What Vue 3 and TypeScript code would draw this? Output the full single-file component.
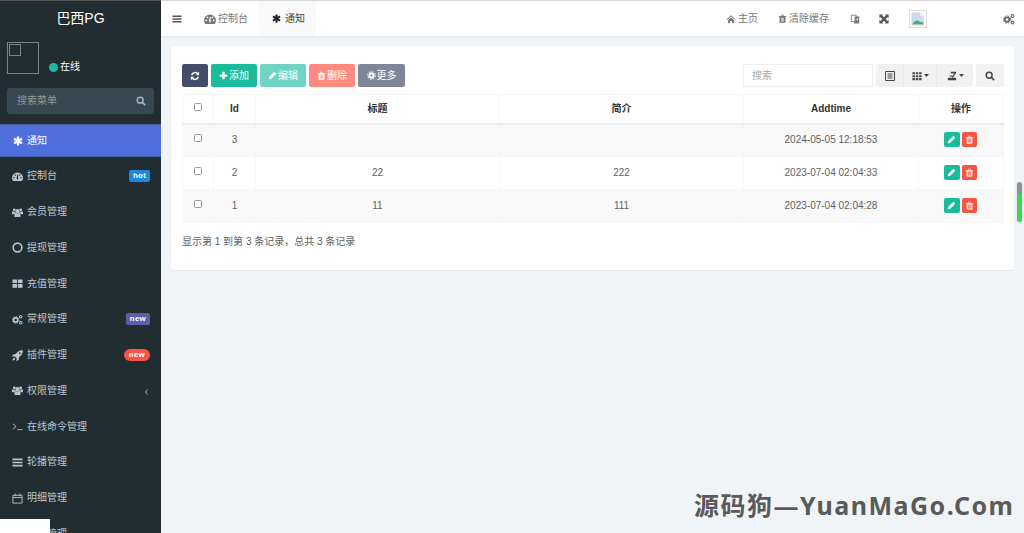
<script setup lang="ts">
interface MenuItem { label: string; icon: string; badge?: string; kind?: string; caret?: boolean; active?: boolean }
const menu: MenuItem[] = [
  { label: '通知', icon: 'asterisk', active: true },
  { label: '控制台', icon: 'dash', badge: 'hot', kind: 'hot' },
  { label: '会员管理', icon: 'users' },
  { label: '提现管理', icon: 'circle' },
  { label: '充值管理', icon: 'th' },
  { label: '常规管理', icon: 'cogs', badge: 'new', kind: 'purple' },
  { label: '插件管理', icon: 'rocket', badge: 'new', kind: 'red' },
  { label: '权限管理', icon: 'users', caret: true },
  { label: '在线命令管理', icon: 'term' },
  { label: '轮播管理', icon: 'bars' },
  { label: '明细管理', icon: 'cal' },
  { label: '记录管理', icon: 'bars' },
]
const rows = [
  { id: 3, title: '', intro: '', time: '2024-05-05 12:18:53' },
  { id: 2, title: '22', intro: '222', time: '2023-07-04 02:04:33' },
  { id: 1, title: '11', intro: '111', time: '2023-07-04 02:04:28' },
]
</script>

<template>
  <div class="page">
    <svg class="defs" aria-hidden="true">
      <symbol id="asterisk" viewBox="0 0 24 24"><path d="M12 1v22M2.500 6.500l19 11M21.500 6.500l-19 11" fill="none" stroke="currentColor" stroke-width="5.500"/></symbol>
      <symbol id="dash" viewBox="0 0 24 24"><path fill-rule="evenodd" d="M12 3a12 12 0 0 0-12 12c0 2.600.9 5 2.400 7h19.200a12 12 0 0 0 2.400-7A12 12 0 0 0 12 3Zm-7.500 13.500a1.700 1.700 0 1 1 0-3.400 1.700 1.700 0 0 1 0 3.400Zm2.500-6a1.700 1.700 0 1 1 0-3.400 1.700 1.700 0 0 1 0 3.400Zm6.500 8a2.500 2.500 0 0 1-3.500-2.500l1.500-8.500 2 .4-.2 8a2.500 2.500 0 0 1 .2 2.600ZM17 10.500a1.700 1.700 0 1 1 0-3.400 1.700 1.700 0 0 1 0 3.400Zm2.500 6a1.700 1.700 0 1 1 0-3.400 1.700 1.700 0 0 1 0 3.400Z"/></symbol>
      <symbol id="users" viewBox="0 0 24 24"><circle cx="12" cy="9" r="4.500"/><circle cx="5" cy="6.500" r="3"/><circle cx="19" cy="6.500" r="3"/><path d="M5.500 22v-5c0-3 2-4.500 3-4.500 1 1 2.200 1.500 3.500 1.500s2.500-.5 3.500-1.500c1 0 3 1.500 3 4.500v5ZM0 16v-4c0-1.500 1-2.500 2-2.500.8.700 1.800 1.200 3 1.200.5 0 1 0 1.500-.2.300 1 .8 1.500 1.300 2-2 1-3.300 2.500-3.400 3.500Zm24 0v-4c0-1.500-1-2.500-2-2.500-.8.700-1.800 1.200-3 1.200-.5 0-1 0-1.500-.2-.3 1-.8 1.500-1.300 2 2 1 3.300 2.500 3.400 3.500Z"/></symbol>
      <symbol id="circle" viewBox="0 0 24 24"><circle cx="12" cy="12" r="9.500" fill="none" stroke="currentColor" stroke-width="3.500"/></symbol>
      <symbol id="th" viewBox="0 0 24 24"><path d="M1 3h10v8H1Zm12 0h10v8H13ZM1 13h10v8H1Zm12 0h10v8H13Z"/></symbol>
      <symbol id="cogs" viewBox="0 0 24 24"><circle cx="8" cy="13" r="4.500" fill="none" stroke="currentColor" stroke-width="3.500"/><circle cx="8" cy="13" r="7.300" fill="none" stroke="currentColor" stroke-width="2" stroke-dasharray="3 2.700"/><circle cx="19" cy="6" r="2.800" fill="none" stroke="currentColor" stroke-width="2.200"/><circle cx="19" cy="19" r="2.800" fill="none" stroke="currentColor" stroke-width="2.200"/></symbol>
      <symbol id="rocket" viewBox="0 0 24 24"><path d="M23.500 .5c.5 6.500-2.500 11.500-8 15l-.5 5.500-5 3-.5-1 1-4.500-5-5-4.500 1-1-.5 3-5 5.500-.5C11.500 3 17 0 23.500 .5ZM17 5a2 2 0 1 0 0 4 2 2 0 0 0 0-4ZM4 17c1.500 0 3 1.500 3 3-1 1.500-4 2.500-6 3 .5-2 1.500-5 3-6Z"/></symbol>
      <symbol id="term" viewBox="0 0 24 24"><path d="m2 6 7 6-7 6M12 19h11" fill="none" stroke="currentColor" stroke-width="2"/></symbol>
      <symbol id="bars" viewBox="0 0 24 24"><path d="M1 3.500h22v3.500H1Zm0 6.750h22v3.500H1ZM1 17h22v3.500H1Z"/></symbol>
      <symbol id="cal" viewBox="0 0 24 24"><path d="M2 5h20v17H2Zm0 5h20M7 1v6M17 1v6" fill="none" stroke="currentColor" stroke-width="2"/></symbol>
      <symbol id="refresh" viewBox="0 0 24 24"><path d="M4 10a8.500 8.500 0 0 1 14.500-3.500M20 14A8.500 8.500 0 0 1 5.500 17.500" fill="none" stroke="currentColor" stroke-width="3.600"/><path d="M22 2v8h-8ZM2 22v-8h8Z"/></symbol>
      <symbol id="plus" viewBox="0 0 24 24"><path d="M9 2h6v7h7v6h-7v7H9v-7H2V9h7Z"/></symbol>
      <symbol id="pencil" viewBox="0 0 24 24"><path d="M17 2 22 7 8 21l-6 1 1-6Z"/></symbol>
      <symbol id="trash" viewBox="0 0 24 24"><path fill-rule="evenodd" d="M9 2h6l1.500 3H22v2.500h-2V21a2 2 0 0 1-2 2H6a2 2 0 0 1-2-2V7.500H2V5h5.500Zm.5 1.800L9 5h6l-.5-1.200ZM8 10v10h1.500V10Zm3.250 0v10h1.500V10ZM14.500 10v10H16V10Z"/></symbol>
      <symbol id="gear" viewBox="0 0 24 24"><circle cx="12" cy="12" r="5.500" fill="none" stroke="currentColor" stroke-width="5"/><circle cx="12" cy="12" r="10" fill="none" stroke="currentColor" stroke-width="3" stroke-dasharray="4 3.850"/></symbol>
      <symbol id="home" viewBox="0 0 24 24"><path d="M12 3 23 13l-1.500 1.500L12 6l-9.500 8.500L1 13Zm-7 11.500 7-6 7 6V22h-5v-5h-4v5H5Z"/></symbol>
      <symbol id="expand" viewBox="0 0 24 24"><path d="M1 1h9L7.500 3.500 12 8l4.500-4.500L14 1h9v9l-2.500-2.500L16 12l4.500 4.500L23 14v9h-9l2.500-2.500L12 16l-4.500 4.500L10 23H1v-9l2.500 2.500L8 12 3.500 7.500 1 10Z"/></symbol>
      <symbol id="lang" viewBox="0 0 24 24"><path d="M3 3h12v15H3Z" fill="none" stroke="currentColor" stroke-width="2"/><path d="M11 6h11v17H9l2-5Zm4 5v2h-2v2h6v-4Z"/></symbol>
      <symbol id="list" viewBox="0 0 10 10"><path d="M.5.500h9v9h-9Z" fill="none" stroke="currentColor" stroke-width="1"/><path d="M2.500 2.500h5v1h-5Zm0 2h5v1h-5Zm0 2h5v1h-5Z"/></symbol>
      <symbol id="cols" viewBox="0 0 24 24"><path d="M1 3h6v5H1Zm8 0h6v5H9Zm8 0h6v5h-6ZM1 10h6v5H1Zm8 0h6v5H9Zm8 0h6v5h-6ZM1 17h6v5H1Zm8 0h6v5H9Zm8 0h6v5h-6Z"/></symbol>
      <symbol id="export" viewBox="0 0 24 24"><path d="M9 2h13v3L14 16l-3-2 7-8H9ZM6 11h6v2H6ZM2 16h20v6H2Z"/></symbol>
      <symbol id="search" viewBox="0 0 24 24"><circle cx="10" cy="10" r="7" fill="none" stroke="currentColor" stroke-width="3.500"/><path d="m15 15 7 7" stroke="currentColor" stroke-width="4"/></symbol>
      <symbol id="caret" viewBox="0 0 10 6"><path d="M0 0h10L5 6Z"/></symbol>
      <symbol id="chev" viewBox="0 0 10 14"><path d="M7 2 3 7l4 5" fill="none" stroke="currentColor" stroke-width="1.600"/></symbol>
    </svg>

    <aside class="side">
      <div class="logo">巴西PG</div>
      <div class="user">
        <div class="avatar"><span class="avatar-in"></span></div>
        <div class="status"><span class="dot"></span>在线</div>
      </div>
      <div class="menu-search">
        <span>搜索菜单</span>
        <svg class="ic11"><use href="#search" /></svg>
      </div>
      <ul class="menu">
        <li v-for="m in menu" :key="m.label" :class="{ active: m.active }">
          <svg class="mi" :class="{ tight: m.icon === 'asterisk' }"><use :href="'#' + m.icon" /></svg>
          <span class="ml">{{ m.label }}</span>
          <span v-if="m.badge" class="badge" :class="m.kind">{{ m.badge }}</span>
          <svg v-if="m.caret" class="chev"><use href="#chev" /></svg>
        </li>
      </ul>
    </aside>

    <main class="main">
      <header class="top">
        <svg class="burger"><use href="#bars" /></svg>
        <div class="tab"><svg class="ic12"><use href="#dash" /></svg>控制台</div>
        <div class="tab current"><svg class="ic9"><use href="#asterisk" /></svg>通知</div>
        <div class="top-right">
          <span class="tr tr-home"><svg class="ic10"><use href="#home" /></svg>主页</span>
          <span class="tr tr-clear"><svg class="ic9"><use href="#trash" /></svg>清除缓存</span>
          <span class="tr tr-lang"><svg class="ic10"><use href="#lang" /></svg></span>
          <span class="tr tr-exp"><svg class="ic10"><use href="#expand" /></svg></span>
          <span class="broken">
            <svg viewBox="0 0 16 16" width="14" height="14"><path d="M1 1h9l4 4v10H1Z" fill="#c9dcf5" stroke="#c4c4c4" stroke-width=".6"/><path d="M2 14c2-5 6-5 8-3l4 1v2Z" fill="#4caf50"/><path d="M10 1v4h4" fill="#fff" stroke="#c4c4c4" stroke-width=".6"/></svg>
          </span>
          <svg class="ic12 tr-cogs"><use href="#cogs" /></svg>
        </div>
      </header>

      <section class="panel">
        <div class="toolbar">
          <button class="btn navy"><svg class="ic10"><use href="#refresh" /></svg></button>
          <button class="btn teal w46"><svg class="ic9"><use href="#plus" /></svg>添加</button>
          <button class="btn teal-l w46"><svg class="ic9"><use href="#pencil" /></svg>编辑</button>
          <button class="btn red-l w46"><svg class="ic9"><use href="#trash" /></svg>删除</button>
          <button class="btn grey w47"><svg class="ic9"><use href="#gear" /></svg>更多</button>
          <div class="search-box">搜索</div>
          <div class="group">
            <button class="gbtn g1"><svg class="ic10"><use href="#list" /></svg></button>
            <button class="gbtn g2"><svg class="ic10"><use href="#cols" /></svg><svg class="car"><use href="#caret" /></svg></button>
            <button class="gbtn g3"><svg class="ic10"><use href="#export" /></svg><svg class="car"><use href="#caret" /></svg></button>
          </div>
          <button class="gbtn solo"><svg class="ic10"><use href="#search" /></svg></button>
        </div>

        <table class="grid">
          <colgroup>
            <col style="width: 31px" /><col style="width: 42px" /><col style="width: 244px" /><col style="width: 244px" /><col style="width: 175px" /><col style="width: 85px" />
          </colgroup>
          <thead>
            <tr>
              <th><span class="check"></span></th>
              <th>Id</th><th>标题</th><th>简介</th><th>Addtime</th><th>操作</th>
            </tr>
          </thead>
          <tbody>
            <tr v-for="r in rows" :key="r.id">
              <td><span class="check"></span></td>
              <td>{{ r.id }}</td>
              <td>{{ r.title }}</td>
              <td>{{ r.intro }}</td>
              <td>{{ r.time }}</td>
              <td>
                <div class="ops">
                  <button class="op teal"><svg class="ic9"><use href="#pencil" /></svg></button>
                  <button class="op red"><svg class="ic9"><use href="#trash" /></svg></button>
                </div>
              </td>
            </tr>
          </tbody>
        </table>
        <p class="summary">显示第 1 到第 3 条记录，总共 3 条记录</p>
      </section>
    </main>

    <div class="blank"></div>
    <div class="scroll"></div>
    <div class="mark">源码狗—YuanMaGo.Com</div>
  </div>
</template>

<style>
html, body { margin: 0; overflow: hidden; }
</style>

<style scoped>
* { box-sizing: border-box; }
.defs { display: none; }
svg { fill: currentColor; flex: none; }
.page {
  position: relative;
  display: flex;
  width: 1024px;
  height: 533px;
  overflow: hidden;
  background: #f1f4f6;
  font: 10px/1.4 "Liberation Sans", "Noto Sans CJK SC", sans-serif;
  color: #5f5f5f;
}
.ic9 { width: 9px; height: 9px; }
.ic10 { width: 10px; height: 10px; }
.ic11 { width: 11px; height: 11px; }
.ic12 { width: 12px; height: 12px; }

.side { width: 161px; flex: none; background: #222d32; color: #b8c7ce; overflow: hidden; border-top: 1px solid #555; }
.logo { height: 34px; padding-top: 2px; display: flex; align-items: center; justify-content: center; color: #fff; font-size: 14px; }
.user { position: relative; height: 53px; padding: 7px 0 0 7px; display: flex; }
.avatar { width: 32px; height: 32px; border: 1px solid #7d8487; padding: 1px 0 0 1px; }
.avatar-in { display: block; width: 12px; height: 12px; border: 1px solid #7d8487; }
.status { display: flex; align-items: center; height: 12px; margin: 19px 0 0 10px; color: #fff; }
.dot { width: 9px; height: 9px; border-radius: 50%; background: #18bc9c; margin-right: 2px; }
.menu-search { margin: 0 7px; height: 26px; border-radius: 3px; background: #374850; color: #8b9a9f; display: flex; align-items: center; justify-content: space-between; padding: 0 8px 0 10px; }
.menu-search svg { color: #a9b4b8; width: 10px; height: 10px; }
.menu { list-style: none; margin: 10px 0 0; padding: 0; display: flex; flex-direction: column; gap: 2.750px; }
.menu li { position: relative; height: 33px; display: flex; align-items: center; padding: 0 11px 0 12px; flex: none; }
.menu li.active { background: #4e6fdc; color: #fff; border-top: 1px solid #46609f; border-bottom: 1px solid #46609f; }
.mi { width: 11px; height: 11px; margin-right: 4px; }
.mi.tight { width: 10px; height: 10px; margin: 0 4px 0 1px; }
.ml { flex: 1; white-space: nowrap; }
.badge { height: 12px; line-height: 12px; padding: 0 4px; border-radius: 2px; color: #fff; font-size: 8px; font-weight: 700; letter-spacing: .2px; }
.hot { background: #1b88e8; }
.purple { background: #605ca8; }
.badge.red { background: #f75444; border-radius: 7px; padding: 0 5px; }
.chev { width: 5px; height: 8px; margin: 3px 1px 0 0; }

.main { flex: 1; min-width: 0; display: flex; flex-direction: column; }
.top { height: 36px; flex: none; background: #fff; border-top: 1px solid #d8d8d8; box-shadow: 0 1px 2px rgba(0, 0, 0, .07); display: flex; align-items: center; position: relative; }
.burger { width: 10px; height: 10px; margin: 0 0 0 11px; color: #555; }
.tab { height: 35px; display: flex; align-items: center; color: #777; gap: 2px; padding: 0 11px; margin-left: 11px; white-space: nowrap; }
.tab.current { background: #f9f9f9; color: #444; margin-left: 0; padding: 0 12px 0 13px; gap: 4px; width: 57px; }
.tab.current svg { color: #222; }
.top-right { margin-left: auto; display: flex; align-items: center; color: #777; }
.tr { display: flex; align-items: center; gap: 2px; white-space: nowrap; }
.tr-home { margin-right: 20px; }
.tr-clear { margin-right: 21px; }
.tr-lang { margin-right: 19px; }
.tr-exp { margin-right: 20px; color: #555; }
.broken { width: 18px; height: 18px; border: 1px solid #ddd; display: flex; align-items: center; justify-content: center; margin-right: 76px; }
.tr-cogs { margin-right: 9px; color: #666; }

.panel { margin: 10px 10px 0; height: 224px; background: #fff; border-radius: 3px; box-shadow: 0 1px 1px rgba(0, 0, 0, .05); padding: 18px 10px 0 11px; }
.toolbar { display: flex; height: 23px; align-items: stretch; margin-bottom: 7px; }
.btn { border: 0; border-radius: 2px; padding: 0; color: #fff; font: inherit; display: flex; align-items: center; justify-content: center; gap: 1px; margin-right: 3px; }
.navy { width: 26px; background: #444c69; }
.teal { background: #18bc9c; }
.teal-l { background: #6fd5c2; }
.red-l { background: #ff8a80; }
.grey { background: #808599; margin-right: 0; }
.w46 { width: 46px; }
.w47 { width: 47px; }
.search-box { margin-left: auto; width: 130px; border: 1px solid #efefef; color: #a9a9a9; display: flex; align-items: center; padding-left: 8px; margin-right: 3px; }
.group { display: flex; border-radius: 3px; overflow: hidden; margin-right: 3px; }
.gbtn { border: 0; background: #f1f1f1; color: #444; padding: 0; display: flex; align-items: center; justify-content: center; gap: 2px; }
.g1 { width: 27px; }
.g2 { width: 34px; border-left: 1px solid #e8e8e8; border-right: 1px solid #e8e8e8; }
.g3 { width: 36px; }
.solo { width: 28px; border-radius: 3px; }
.car { width: 5px; height: 3px; }

.grid { width: 821px; table-layout: fixed; border-collapse: collapse; text-align: center; }
.grid th { height: 29px; color: #333; font-weight: 700; padding: 0; border: 1px solid #f6f6f6; border-bottom: 2px solid #ececec; }
.grid td { height: 33px; padding: 0; border: 1px solid #f7f7f7; }
.grid tbody tr:nth-child(odd) { background: #f9f9f9; }
.check { display: inline-block; width: 8px; height: 8px; border: 1px solid #999; border-radius: 1.500px; background: #fff; vertical-align: 1px; }
.ops { display: flex; justify-content: center; gap: 2px; padding-right: 2px; padding-bottom: 2px; }
.op { width: 16px; height: 15px; border: 0; border-radius: 2px; color: #fff; padding: 0; display: flex; align-items: center; justify-content: center; }
.op.red { width: 15px; background: #f75444; color: #ffd9d4; }
.summary { margin: 12px 0 0; color: #5f5f5f; }

.blank { position: absolute; left: 0; bottom: 0; width: 50px; height: 14px; background: #fff; }
.scroll { position: absolute; left: 1017px; top: 182px; width: 5px; height: 40px; border-radius: 3px; background: linear-gradient(#8f9396 0 12px, #3fd25c 12px); box-shadow: 0 1px 3px rgba(0, 0, 0, .12); }
.mark { position: absolute; left: 694px; top: 489px; white-space: nowrap; font-size: 25px; line-height: 32px; font-weight: 700; color: #5a5a5a; letter-spacing: 1.500px; font-family: "Noto Sans", "Noto Sans CJK SC", sans-serif; }
</style>
